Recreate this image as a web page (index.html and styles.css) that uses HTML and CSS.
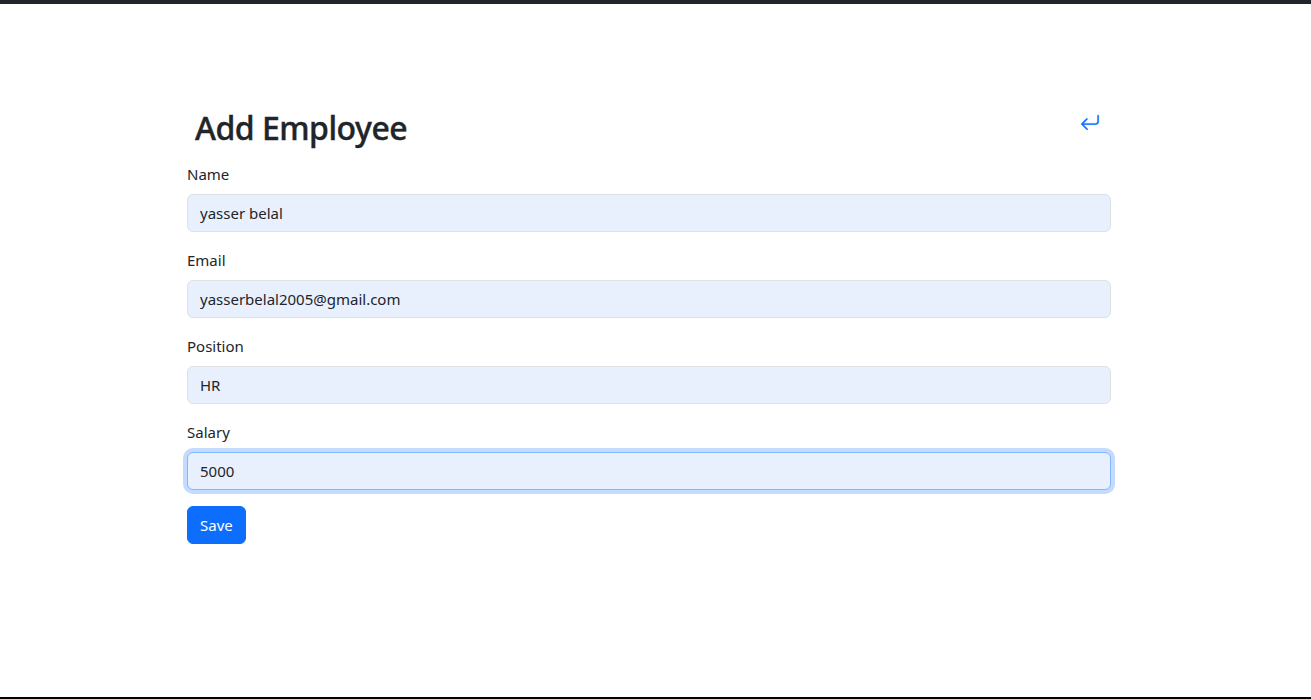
FILE: index.html
```html
<!DOCTYPE html>
<html lang="en">
<head>
<meta charset="utf-8">
<title>Add Employee</title>
<link rel="stylesheet" href="styles.css">
</head>
<body>
<div class="topbar"></div>
<main class="page">
  <div class="header">
    <h2 class="title">Add Employee</h2>
    <a class="back" href="#" aria-label="Back">
      <svg viewBox="0 0 16 16" width="20" height="20" fill="currentColor" stroke="currentColor" stroke-width="0.35"><path fill-rule="evenodd" d="M14.5 1.5a.5.5 0 0 1 .5.5v4.8a2.5 2.5 0 0 1-2.5 2.5H2.707l3.347 3.346a.5.5 0 0 1-.708.708l-4.2-4.2a.5.5 0 0 1 0-.708l4-4a.5.5 0 1 1 .708.708L2.707 8.3H12.5A1.5 1.5 0 0 0 14 6.8V2a.5.5 0 0 1 .5-.5"/></svg>
    </a>
  </div>
  <form class="form">
    <div class="group">
      <label class="label">Name</label>
      <input class="input" type="text" value="yasser belal">
    </div>
    <div class="group">
      <label class="label">Email</label>
      <input class="input" type="text" value="yasserbelal2005@gmail.com">
    </div>
    <div class="group">
      <label class="label">Position</label>
      <input class="input" type="text" value="HR">
    </div>
    <div class="group">
      <label class="label">Salary</label>
      <input class="input focused" type="text" value="5000">
    </div>
    <button class="btn" type="button">Save</button>
  </form>
</main>
<div class="bottomline"></div>
</body>
</html>
```
FILE: styles.css
```css
* { box-sizing: border-box; }
html, body { margin: 0; padding: 0; }
body {
  font-family: "Noto Sans", "Open Sans", sans-serif;
  color: #212529;
  background: #fff;
  height: 699px;
  display: flex;
  flex-direction: column;
  overflow: hidden;
}
.topbar { height: 4px; background: #212529; flex: none; }
.page {
  flex: 1;
  width: 924px;
  margin-left: 187px;
  padding-top: 105px;
}
.header {
  display: flex;
  justify-content: space-between;
  align-items: flex-start;
  padding: 0 11px 0 8px;
  margin-bottom: 15px;
}
.title {
  margin: 0;
  font-size: 32px;
  font-weight: 500;
  line-height: 38px;
  letter-spacing: -0.5px;
  -webkit-text-stroke: 0.4px #212529;
}
.back { color: #0d6efd; display: block; margin-top: 4px; line-height: 0; }
.form { display: flex; flex-direction: column; align-items: flex-start; }
.group { width: 100%; margin-bottom: 16px; }
.label { display: block; font-size: 15px; line-height: 24px; margin-bottom: 8px; }
.input {
  display: block;
  width: 100%;
  height: 38px;
  padding: 6px 12px;
  font-family: inherit;
  font-size: 15px;
  color: #212529;
  background: #e8f0fe;
  border: 1px solid #dee2e6;
  border-radius: 6px;
  outline: none;
}
.input.focused {
  border-color: #86b7fe;
  box-shadow: 0 0 0 4px rgba(13, 110, 253, 0.25);
}
.btn {
  height: 38px;
  padding: 6px 12px;
  font-family: inherit;
  font-size: 15px;
  color: #fff;
  background: #0d6efd;
  border: 1px solid #0d6efd;
  border-radius: 6px;
}
.bottomline { height: 2px; background: #000; flex: none; }
```
